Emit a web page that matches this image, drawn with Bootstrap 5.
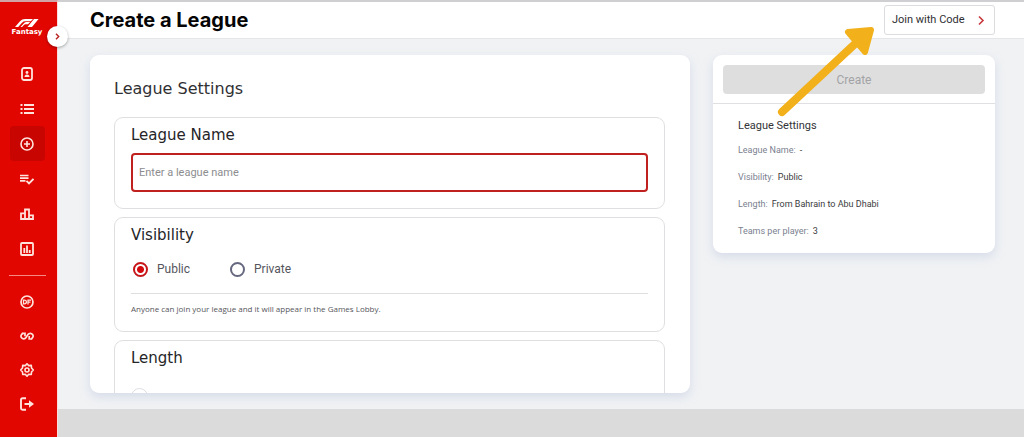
<!DOCTYPE html>
<html lang="en">
<head>
<meta charset="utf-8">
<meta name="viewport" content="width=device-width, initial-scale=1">
<title>Create a League</title>
<link href="https://cdn.jsdelivr.net/npm/bootstrap@5.3.0/dist/css/bootstrap.min.css" rel="stylesheet">
<style>
  body { font-family: Roboto, "Open Sans", sans-serif; font-size: 11px; line-height: 16px; color: #3b3b40; background: #f0f2f4; }
  .wide { font-family: "DejaVu Sans", Inter, sans-serif; }
  h1.wide { font: 700 20px/24px Inter, sans-serif; color: #050505; }
  h2.wide { font-size: 16px; line-height: 20px; color: #303033; }
  h3.wide { font-size: 15px; line-height: 20px; color: #252528; }

  .side-menu { width: 58px; background: #e10600; border-right: 1px solid #fbdcdb; border-top: 2px solid #d2a3a4; padding: 0 3px 0 0; }
  .brand { height: 54px; padding-top: 17px; color: #fff; font: 700 7px/8px "DejaVu Sans", sans-serif; }
  .brand svg { margin-bottom: 1px; }
  .menu-item { width: 35px; height: 35px; color: #ffe3dc; border-radius: 4px; }
  .menu-item.active { background: #c90501; }
  .menu-low .menu-item { height: 34px; }
  .menu-rule { width: 37px; height: 1px; margin: 9px 0; background: #f58a84; }
  .menu-toggle { top: 26px; left: 47px; width: 21px; height: 21px; z-index: 3; color: #b22; box-shadow: 0 1px 3px #0005; }

  .top-bar { height: 39px; padding: 0 29px 0 32px; border-top: 2px solid #cfcfd1; border-bottom: 1px solid #e6e6e9; }
  .join-btn { width: 111px; height: 30px; padding: 0 9px 0 7px; border: 1px solid #dcdce0; border-radius: 3px; color: #2f2f33; font-size: 11px; }
  .work-area { padding: 16px 29px 16px 32px; gap: 23px; }
  .panel { border-radius: 9px; box-shadow: 0 4px 10px #c3cbe08c; }
  .panel-form { padding: 24px 25px 0 24px; }
  .panel-side { width: 282px; }
  .group-list { gap: 8px; margin-top: 18px; }
  .group-box { border: 1px solid #dfdfe2; border-radius: 9px; padding: 7px 16px 6px; }
  .name-input { height: 39px; padding: 0 6px; border: 2px solid #c0201f; border-radius: 4px; font-size: 11px; }
  .name-input::placeholder { color: #8d8d90; opacity: 1; }
  .name-input:focus { outline: 0; }
  .pick-row { gap: 40px; padding: 0 2px 16px; }
  .pick-option { gap: 9px; }
  .pick { appearance: none; width: 15px; height: 15px; margin: 0; border: 2px solid #66687f; border-radius: 50%; background: #fff; }
  .pick:checked { border-color: #c5161a; background: radial-gradient(circle, #d3090d 0 3px, #fff 4px); }
  .pick-pale { width: 17px; height: 17px; border-color: #dcdde2; border-width: 1px; }
  .pick-label { font-size: 12px; color: #55555c; }
  .hint { font: 8px/12px "Open Sans", sans-serif; color: #56565b; border-top: 1px solid #dedee1; padding: 9px 0 10px; }
  .create-btn { height: 29px; background: #dedede; color: #a3a3a6; border: 0; border-radius: 4px; font-size: 12px; }
  .create-wrap { padding: 10px 10px 9px; border-bottom: 1px solid #e0e0e3; }
  .summary { padding: 13px 24px 14px 25px; }
  .summary h2 { font-size: 11px; line-height: 18px; font-weight: 400; color: #333338; }
  .summary dl { font-size: 9px; line-height: 15px; gap: 12px; }
  .summary dt { font-weight: 400; color: #7b7f90; }
  .pointer { top: 24px; right: 149px; z-index: 4; pointer-events: none; }
  .foot-band { height: 28px; background: #dbdbdb; }
</style>
</head>
<body>
<div class="d-flex vh-100 position-relative overflow-hidden">
  <nav class="side-menu d-flex flex-column align-items-center flex-shrink-0" aria-label="Main">
    <a class="brand d-flex flex-column align-items-center text-decoration-none" href="#">
      <svg width="24" height="8" viewBox="0 0 24 8" fill="currentColor" aria-hidden="true"><path d="M0 8 5 2.3Q7 0 10 0h8l-2.200 2.300H10.500Q8.300 2.300 7 3.700L3.200 8zM5.500 8l3.200-3.600Q9.900 3.100 11.700 3.100h3.500L13 5.300h-2.500Q9.500 5.300 8.700 6.200L7.100 8zM19 0h4.600L17 8h-4.500z"/></svg>
      <span>Fantasy</span>
    </a>
    <a class="menu-item d-flex align-items-center justify-content-center" href="#" aria-label="Teams">
      <svg width="14" height="14" viewBox="0 0 14 14" fill="none" stroke="currentColor" stroke-width="1.800"><rect x="2" y="1" width="10" height="12" rx="2"/><circle cx="7" cy="5.500" r="1.400" fill="currentColor" stroke="none"/><path d="M4.500 10q0-2.500 2.500-2.500T9.500 10z" fill="currentColor" stroke="none"/></svg></a>
    <a class="menu-item d-flex align-items-center justify-content-center" href="#" aria-label="Leagues">
      <svg width="14" height="14" viewBox="0 0 14 14" stroke="currentColor" stroke-width="2"><path d="M.5 3h2m1.500 0h10M.5 7h2M4 7h10M.5 11h2M4 11h10"/></svg></a>
    <a class="menu-item active d-flex align-items-center justify-content-center" href="#" aria-label="Create league">
      <svg width="14" height="14" viewBox="0 0 14 14" fill="none" stroke="currentColor" stroke-width="1.600"><circle cx="7" cy="7" r="6"/><path d="M7 4v6M4 7h6"/></svg></a>
    <a class="menu-item d-flex align-items-center justify-content-center" href="#" aria-label="Rules">
      <svg width="14" height="14" viewBox="0 0 14 14" fill="none" stroke="currentColor" stroke-width="1.700"><path d="M0 3.500h8.500M0 6.200h8.500M0 8.900h5.500"/><path d="m6.500 8.800 2.500 2.500 4.500-4.500" stroke-width="1.900"/></svg></a>
    <a class="menu-item d-flex align-items-center justify-content-center" href="#" aria-label="Standings">
      <svg width="14" height="14" viewBox="0 0 14 14" fill="none" stroke="currentColor" stroke-width="1.800"><path d="M1 12V6.300h4V12zM5 12V2.500h4V12zM9 12V8.300h4V12z"/></svg></a>
    <a class="menu-item d-flex align-items-center justify-content-center" href="#" aria-label="Statistics">
      <svg width="14" height="14" viewBox="0 0 14 14" fill="none" stroke="currentColor" stroke-width="1.800"><rect x="1" y="1" width="12" height="12" rx="1"/><path d="M4.300 11V6M7 11V3.500M9.700 11V8"/></svg></a>
    <div class="menu-rule flex-shrink-0"></div>
    <div class="menu-low">
      <a class="menu-item d-flex align-items-center justify-content-center" href="#" aria-label="Daily fantasy">
        <svg width="14" height="14" viewBox="0 0 14 14" fill="none" stroke="currentColor" stroke-width="1.700"><circle cx="7" cy="7" r="6"/><path d="M3.500 5.200v3.600h1q1.900 0 1.900-1.800T4.500 5.200zM8 9.500V5.200h3M8 7.200h2.500" stroke-width="1.300"/></svg></a>
      <a class="menu-item d-flex align-items-center justify-content-center" href="#" aria-label="Transfers">
        <svg width="14" height="14" viewBox="0 0 14 14" fill="none" stroke="currentColor" stroke-width="1.700"><path d="M3 4.500a2.700 2.700 0 1 0 3 4L8 5.500a2.800 2.800 0 1 1 3 4.300"/><path d="M1.800 4.300H5v3M12.300 10H9.200V7"/></svg></a>
      <a class="menu-item d-flex align-items-center justify-content-center" href="#" aria-label="Settings">
        <svg width="14" height="14" viewBox="0 0 14 14" fill="none" stroke="currentColor" stroke-width="1.600" stroke-linejoin="round"><path d="m7 .8 1.700 1.800 2.600-.2.200 2.500L13.300 7l-1.800 2-.2 2.500-2.600-.2L7 13.200l-1.700-1.900-2.600.2L2.500 9 .7 7l1.800-2.100.2-2.500 2.600.2z"/><circle cx="7" cy="7" r="2"/></svg></a>
      <a class="menu-item d-flex align-items-center justify-content-center" href="#" aria-label="Log out">
        <svg width="14" height="14" viewBox="0 0 14 14" fill="none" stroke="currentColor" stroke-width="1.900"><path d="M6 1.200H2.500Q1 1.200 1 2.700v8.600q0 1.500 1.500 1.500H6M4.500 7H12"/><path d="m9 3.200 5 3.800-5 3.800z" fill="currentColor" stroke="none"/></svg></a>
    </div>
  </nav>
  <button type="button" class="menu-toggle position-absolute rounded-circle border-0 bg-white p-0 d-flex align-items-center justify-content-center" aria-label="Expand menu">
    <svg width="5" height="7" viewBox="0 0 5 7" fill="none" stroke="currentColor" stroke-width="1.400"><path d="m1 .8 2.700 2.700L1 6.200"/></svg>
  </button>

  <div class="d-flex flex-column flex-grow-1 overflow-hidden">
    <header class="top-bar bg-white d-flex align-items-center justify-content-between flex-shrink-0">
      <h1 class="wide m-0">Create a League</h1>
      <button type="button" class="join-btn bg-white d-flex align-items-center justify-content-between">
        <span>Join with Code</span>
        <svg width="8" height="11" viewBox="0 0 8 11" fill="none" stroke="#c8383c" stroke-width="1.600" aria-hidden="true"><path d="M2 1.500 6 5.500 2 9.500"/></svg>
      </button>
    </header>

    <main class="work-area d-flex align-items-start flex-grow-1 overflow-hidden">
      <form class="panel panel-form bg-white flex-grow-1 h-100 overflow-hidden">
        <h2 class="wide fw-normal mb-0">League Settings</h2>
        <div class="group-list d-flex flex-column">
          <section class="group-box pb-3">
            <h3 class="wide fw-normal mb-2"><label class="d-block" for="league-name">League Name</label></h3>
            <input id="league-name" type="text" class="name-input w-100 d-block" placeholder="Enter a league name">
          </section>
          <section class="group-box">
            <h3 class="wide fw-normal mb-3">Visibility</h3>
            <div class="pick-row d-flex">
              <div class="pick-option d-flex align-items-center"><input class="pick" type="radio" name="visibility" id="public" checked><label class="pick-label" for="public">Public</label></div>
              <div class="pick-option d-flex align-items-center"><input class="pick" type="radio" name="visibility" id="private"><label class="pick-label" for="private">Private</label></div>
            </div>
            <p class="hint m-0">Anyone can join your league and it will appear in the Games Lobby.</p>
          </section>
          <section class="group-box">
            <h3 class="wide fw-normal mb-3 pb-1">Length</h3>
            <input class="pick pick-pale d-block" type="radio" name="span" aria-label="Full season">
          </section>
        </div>
      </form>

      <aside class="panel panel-side bg-white flex-shrink-0">
        <div class="create-wrap"><button type="button" class="create-btn w-100 d-block" disabled>Create</button></div>
        <div class="summary">
          <h2 class="mb-2">League Settings</h2>
          <dl class="d-flex flex-column m-0">
            <div class="d-flex gap-1"><dt>League Name:</dt><dd class="m-0">-</dd></div>
            <div class="d-flex gap-1"><dt>Visibility:</dt><dd class="m-0">Public</dd></div>
            <div class="d-flex gap-1"><dt>Length:</dt><dd class="m-0">From Bahrain to Abu Dhabi</dd></div>
            <div class="d-flex gap-1"><dt>Teams per player:</dt><dd class="m-0">3</dd></div>
          </dl>
        </div>
      </aside>
    </main>
    <footer class="foot-band flex-shrink-0"></footer>
  </div>

  <svg class="pointer position-absolute" width="100" height="94" viewBox="0 0 100 94" fill="none" stroke="#f2b01b" stroke-linecap="round" stroke-linejoin="round" aria-hidden="true">
    <path d="M7 88 82 18" stroke-width="8"/><path d="M73 8 96 6 90 28Z" fill="#f2b01b" stroke-width="6"/>
  </svg>
</div>
<script src="https://cdn.jsdelivr.net/npm/bootstrap@5.3.0/dist/js/bootstrap.bundle.min.js"></script>
</body>
</html>
